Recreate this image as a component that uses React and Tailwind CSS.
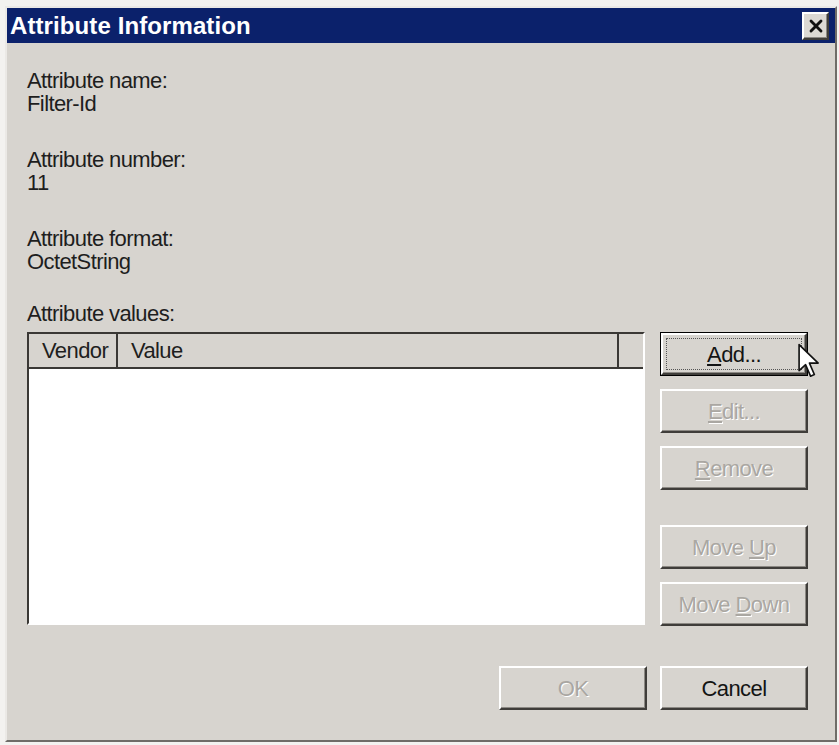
import { X } from 'lucide-react'

const raised =
  'border-2 border-t-white border-l-white border-r-[#3f3d3a] border-b-[#3f3d3a] shadow-[inset_-1px_-1px_#8c8984]'

function DialogButton({ label, mnemonic, disabled, isDefault, children }) {
  const idx = mnemonic != null ? label.indexOf(mnemonic) : -1
  const text =
    idx >= 0 ? (
      <>
        {label.slice(0, idx)}
        <span className="underline underline-offset-2">{label[idx]}</span>
        {label.slice(idx + 1)}
      </>
    ) : (
      label
    )

  return (
    <div
      className={`relative h-[44px] w-[148px] ${isDefault ? 'border border-black' : ''} bg-[#d7d4cf]`}
    >
      <div className={`flex h-full w-full items-center justify-center ${raised}`}>
        {isDefault ? (
          <div className="absolute inset-[5px] border border-dotted border-[#555]" />
        ) : null}
        <span
          className={
            disabled
              ? 'text-[#aaa7a2] [text-shadow:1px_1px_0_#ffffff]'
              : 'text-[#141414]'
          }
        >
          {text}
        </span>
      </div>
      {children}
    </div>
  )
}

function Cursor() {
  return (
    <svg
      className="absolute left-[137px] top-[10px]"
      width="24"
      height="38"
      viewBox="0 0 22 34"
    >
      <path
        d="M1 1 L1 25 L7 19.5 L11.5 30 L15 28.5 L10.5 18 L18.5 18 Z"
        fill="#ffffff"
        stroke="#111"
        strokeWidth="1.5"
        strokeLinejoin="round"
      />
    </svg>
  )
}

function InfoField({ label, value }) {
  return (
    <div className="leading-[23px]">
      <div>{label}</div>
      <div>{value}</div>
    </div>
  )
}

export default function App() {
  return (
    <div className="h-[745px] w-[839px] bg-[#f3f2f0] pl-[5px] pt-[6px] font-['Liberation_Sans',Arial,sans-serif] text-[22px] tracking-[-0.6px] text-[#1e1e1e]">
      <div className="flex h-[736px] w-[832px] flex-col border-2 border-t-[#ebe9e6] border-l-[#ebe9e6] border-r-[#6f6c68] border-b-[#6f6c68] bg-[#d7d4cf]">
        <div className="flex h-[35px] items-center justify-between bg-[#0b216b] pl-[3px] pr-[6px]">
          <span className="text-[24px] font-bold tracking-[0.1px] text-white">Attribute Information</span>
          <div
            className={`flex h-[28px] w-[27px] items-center justify-center bg-[#dcd9d4] ${raised}`}
          >
            <X size={20} strokeWidth={3.4} className="text-[#111]" />
          </div>
        </div>

        <div className="flex flex-1 flex-col pl-[20px] pr-[27px] pt-[26px]">
          <div className="flex flex-col gap-[33px]">
            <InfoField label="Attribute name:" value="Filter-Id" />
            <InfoField label="Attribute number:" value="11" />
            <InfoField label="Attribute format:" value="OctetString" />
          </div>

          <div className="mt-[29px] leading-[23px]">Attribute values:</div>

          <div className="mt-[7px] flex gap-[15px]">
            <div className="flex h-[293px] w-[618px] flex-col border-2 border-t-[#3a3835] border-l-[#3a3835] border-r-white border-b-white bg-white">
              <div className="flex h-[35px] border-b-2 border-[#3a3835] bg-[#d7d4cf]">
                <div className="flex w-[89px] items-center border-r-2 border-[#3a3835] pl-[13px]">
                  Vendor
                </div>
                <div className="flex flex-1 items-center border-r-2 border-[#3a3835] pl-[13px]">
                  Value
                </div>
                <div className="w-[24px]" />
              </div>
              <div className="flex-1 bg-white" />
            </div>

            <div className="flex flex-col">
              <DialogButton label="Add..." mnemonic="A" isDefault>
                <Cursor />
              </DialogButton>
              <div className="mt-[13px]">
                <DialogButton label="Edit..." mnemonic="E" disabled />
              </div>
              <div className="mt-[13px]">
                <DialogButton label="Remove" mnemonic="R" disabled />
              </div>
              <div className="mt-[35px]">
                <DialogButton label="Move Up" mnemonic="U" disabled />
              </div>
              <div className="mt-[13px]">
                <DialogButton label="Move Down" mnemonic="D" disabled />
              </div>
            </div>
          </div>

          <div className="mt-[40px] flex justify-end gap-[13px]">
            <DialogButton label="OK" disabled />
            <DialogButton label="Cancel" />
          </div>
        </div>
      </div>
    </div>
  )
}
